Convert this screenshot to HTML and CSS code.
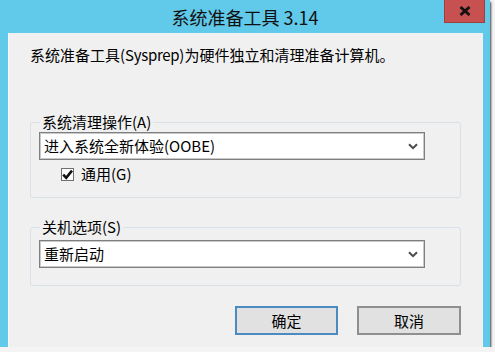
FILE: index.html
```html
<!DOCTYPE html>
<html lang="zh-CN">
<head>
  <meta charset="UTF-8">
  <title>系统准备工具 3.14</title>
  <link rel="stylesheet" href="styles.css">
</head>
<body>
  <div class="window">
    <div class="titlebar">
      <span></span>
      <span class="title">系统准备工具 3.14</span>
      <button class="close" aria-label="关闭">
        <svg width="12" height="10" viewBox="0 0 12 10"><path d="M1.5 1 L10.5 9 M10.5 1 L1.5 9" stroke="#111" stroke-width="2.8"/></svg>
      </button>
    </div>

    <div class="content">
      <p class="desc">系统准备工具(<span class="latin">Sysprep</span>)为硬件独立和清理准备计算机。</p>

      <fieldset class="group">
        <legend>系统清理操作(A)</legend>
        <div class="combo">
          <span>进入系统全新体验(OOBE)</span>
          <svg class="arrow" width="10" height="7" viewBox="0 0 10 7"><path d="M1 1.2 L5 5.2 L9 1.2" fill="none" stroke="#4a4a4a" stroke-width="2"/></svg>
        </div>
        <label class="check">
          <span class="box">
            <svg width="11" height="11" viewBox="0 0 11 11"><path d="M1.2 5.6 L4.2 8.8 L10 1.6" fill="none" stroke="#111" stroke-width="2.6"/></svg>
          </span>
          通用(G)
        </label>
      </fieldset>

      <fieldset class="group group-second">
        <legend>关机选项(S)</legend>
        <div class="combo">
          <span>重新启动</span>
          <svg class="arrow" width="10" height="7" viewBox="0 0 10 7"><path d="M1 1.2 L5 5.2 L9 1.2" fill="none" stroke="#4a4a4a" stroke-width="2"/></svg>
        </div>
      </fieldset>

      <div class="buttons">
        <button class="btn btn-default">确定</button>
        <button class="btn">取消</button>
      </div>
    </div>
  </div>
</body>
</html>
```

FILE: styles.css
```css
body {
  margin: 0;
  background: #f4f4f4;
  font-family: 'Noto Sans CJK SC', 'Noto Sans', sans-serif;
  color: #000;
}

.window {
  width: 490px;
  height: 347px;
  background: #61c9ea;
  display: flex;
  flex-direction: column;
  box-shadow: 1px 2px 2px rgba(0, 0, 0, 0.75);
}

.titlebar {
  height: 33px;
  display: grid;
  grid-template-columns: 1fr auto 1fr;
  align-items: start;
}

.title {
  font-size: 18px;
  line-height: 34px;
  color: #111;
}

.close {
  justify-self: end;
  width: 41px;
  height: 23px;
  margin-right: 5px;
  padding: 0;
  background: #c75050;
  border: 1px solid #9e3f3f;
  border-top: none;
  display: flex;
  align-items: center;
  justify-content: center;
}

.content {
  flex: 1;
  margin: 0 7px 0 8px;
  background: #f0f0f0;
  border-left: 1px solid #f8f8f8;
  display: flex;
  flex-direction: column;
  font-size: 15px;
}

.desc {
  margin: 12px 0 0 21px;
  line-height: 20px;
}

.latin {
  letter-spacing: -0.3px;
}

.group {
  margin: 47px 0 0 21px;
  width: 431px;
  box-sizing: border-box;
  padding: 0 8px 15px 8px;
  border: 1px solid #d8e1e8;
  border-radius: 3px;
}

.group legend {
  padding: 0 2px;
  margin-left: 1px;
  line-height: 20px;
}

.group-second {
  margin-top: 19px;
  padding-top: 3px;
  padding-bottom: 17px;
}

.combo {
  height: 28px;
  width: 386px;
  box-sizing: border-box;
  border: 1px solid #7f7f7f;
  box-shadow: inset 0 0 0 1px #c9c9c9;
  background: #fff;
  display: flex;
  align-items: center;
  justify-content: space-between;
  padding: 0 6px 0 4px;
  line-height: 20px;
}

.check {
  display: flex;
  align-items: center;
  gap: 7px;
  margin: 6px 0 0 22px;
  line-height: 16px;
}

.box {
  width: 13px;
  height: 13px;
  box-sizing: border-box;
  border: 1px solid #707070;
  background: #fff;
  display: flex;
  align-items: center;
  justify-content: center;
}

.buttons {
  display: flex;
  justify-content: flex-end;
  gap: 19px;
  margin-top: 20px;
  padding-right: 22px;
}

.btn {
  width: 104px;
  height: 29px;
  background: #e1e1e1;
  border: 2px solid #8f8f8f;
  font-family: inherit;
  font-size: 15px;
  padding: 0;
}

.btn-default {
  width: 103px;
  border-color: #4b8bc0;
}
```
